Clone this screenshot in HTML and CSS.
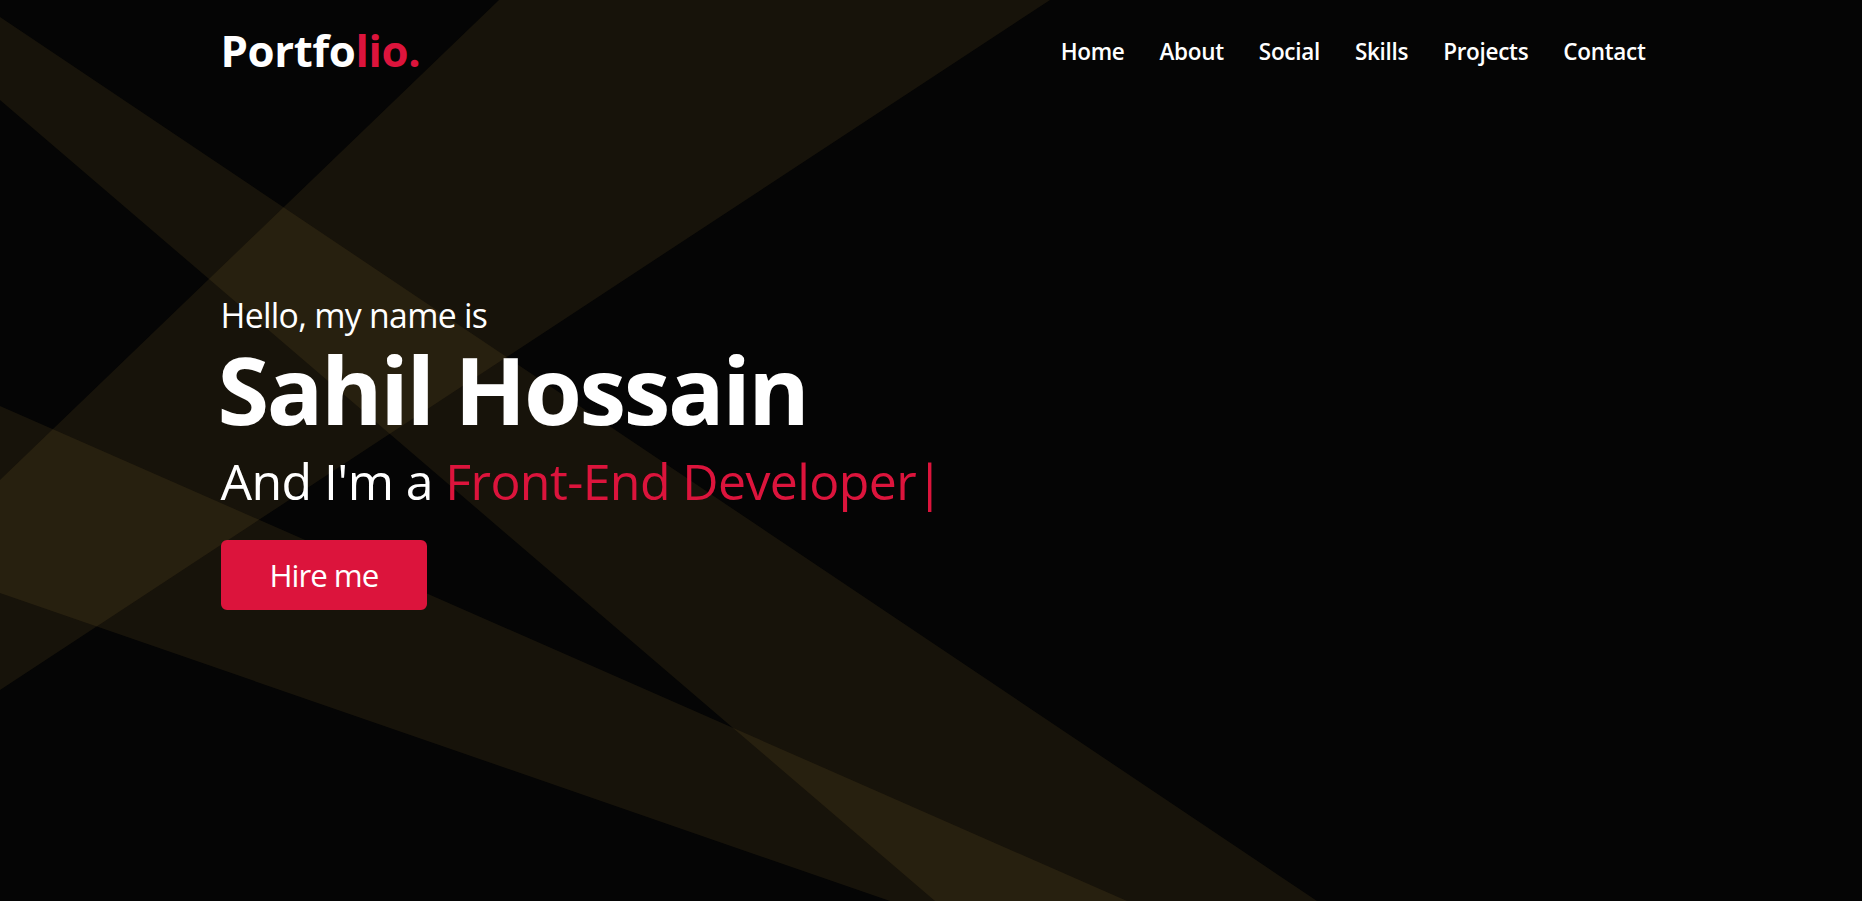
FILE: index.html
```html
<!DOCTYPE html>
<html lang="en">
<head>
<meta charset="utf-8">
<title>Portfolio</title>
<link rel="stylesheet" href="styles.css">
</head>
<body>
<section class="home">
  <svg class="beams" viewBox="0 0 1862 901" preserveAspectRatio="none" aria-hidden="true">
    <polygon class="beam" points="499,0 1050,0 0,690 0,480"/>
    <polygon class="beam" points="0,17 1317,901 935,901 0,100"/>
    <polygon class="beam" points="0,406 1127,901 890,901 0,593"/>
  </svg>
  <nav class="navbar">
    <div class="max-width nav-inner">
      <a class="logo" href="#">Portfo<span>lio.</span></a>
      <ul class="menu">
        <li><a href="#">Home</a></li>
        <li><a href="#">About</a></li>
        <li><a href="#">Social</a></li>
        <li><a href="#">Skills</a></li>
        <li><a href="#">Projects</a></li>
        <li><a href="#">Contact</a></li>
      </ul>
    </div>
  </nav>
  <div class="max-width home-content">
    <div class="text-1">Hello, my name is</div>
    <div class="text-2">Sahil Hossain</div>
    <div class="text-3">And I'm a <span class="typing">Front-End Developer|</span></div>
    <a class="btn" href="#">Hire me</a>
  </div>
</section>
</body>
</html>
```
FILE: styles.css
```css
* {
  box-sizing: border-box;
}
html, body {
  margin: 0;
  padding: 0;
}
body {
  background: #050505;
  color: #fff;
  font-family: "Open Sans", "Noto Sans", sans-serif;
}
a {
  color: inherit;
  text-decoration: none;
}
.home {
  position: relative;
  height: 100vh;
  overflow: hidden;
  background: #050505;
}
.beams {
  position: absolute;
  left: 0;
  top: 0;
  width: 100%;
  height: 100%;
  z-index: 0;
}
.beam {
  fill: rgb(205, 160, 60);
  fill-opacity: 0.095;
}
.max-width {
  max-width: 1625px;
  padding: 0 98px 0 102px;
  margin: 0 auto;
}
.navbar {
  position: relative;
  z-index: 1;
  padding-top: 28px;
}
.nav-inner {
  display: flex;
  justify-content: space-between;
  align-items: center;
}
.logo {
  font-size: 43.75px;
  line-height: 44px;
  font-weight: 700;
  color: #fff;
  letter-spacing: -0.4px;
}
.logo span {
  color: #dc143c;
}
.menu {
  display: flex;
  gap: 35px;
  list-style: none;
  margin: 0;
  padding: 4px 0 0;
}
.menu a {
  display: block;
  font-size: 22.5px;
  line-height: 22.5px;
  font-weight: 600;
  color: #fff;
  letter-spacing: -0.3px;
}
.home-content {
  position: relative;
  z-index: 1;
  padding-top: 227px;
}
.text-1 {
  font-size: 33.75px;
  line-height: 33.75px;
  font-weight: 400;
  letter-spacing: -0.7px;
}
.text-2 {
  margin-top: 9px;
  font-size: 93.75px;
  line-height: 93.75px;
  font-weight: 700;
  letter-spacing: -2.4px;
  margin-left: -3px;
}
.text-3 {
  margin-top: 20px;
  font-size: 50px;
  line-height: 50px;
  font-weight: 400;
  letter-spacing: -0.6px;
}
.typing {
  color: #dc143c;
}
.btn {
  display: inline-block;
  margin-top: 34px;
  background: #dc143c;
  color: #fff;
  font-size: 31.25px;
  line-height: 36px;
  font-weight: 400;
  letter-spacing: -1px;
  padding: 15px 47px;
  border: 2px solid #dc143c;
  border-radius: 6px;
}
```
